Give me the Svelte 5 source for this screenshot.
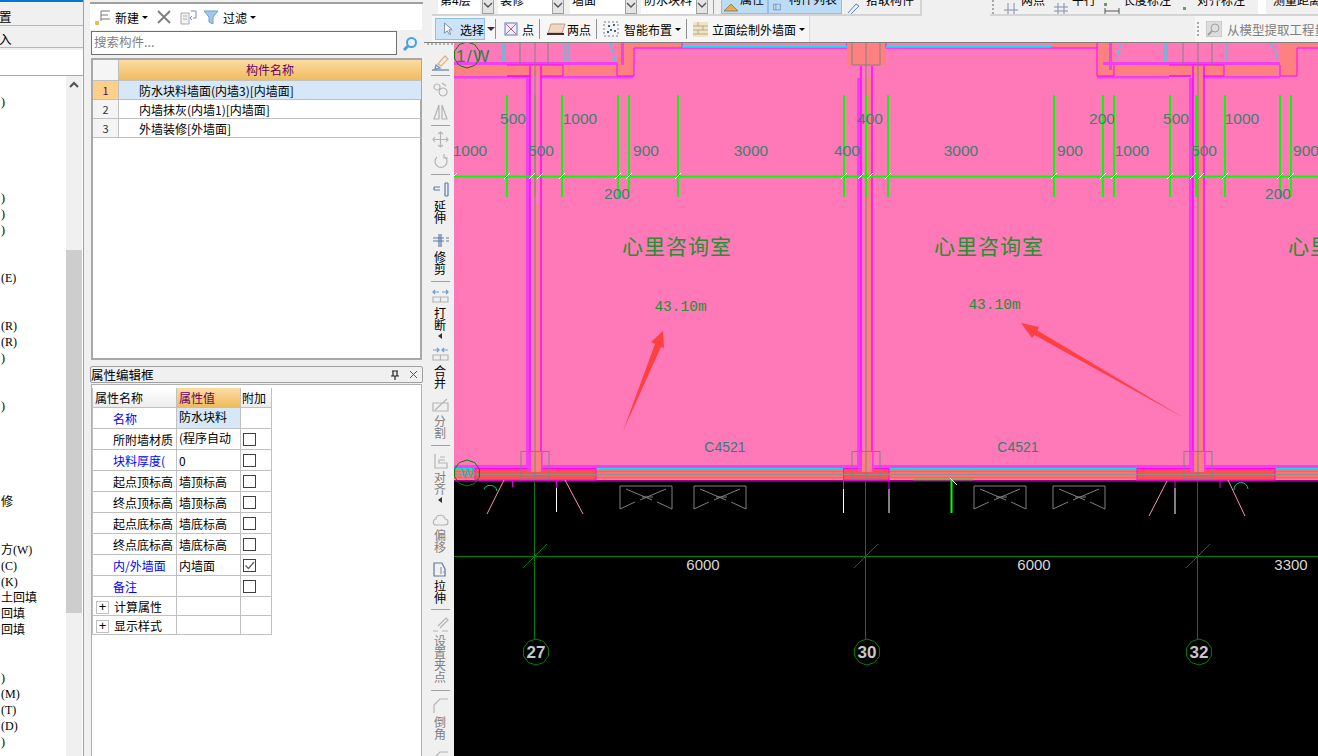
<script>
	const cjk = '"Noto Sans CJK SC", "Liberation Sans", sans-serif';

	// left tree list, one entry per 16px row
	const treeRows = ['', ')', '', '', '', '', '', ')', ')', ')', '', '', '(E)', '', '', '(R)', '(R)', ')', '', '', ')', '', '', '', '', '', '修', '', '', '方(W)', '(C)', '(K)', '土回填', '回填', '回填', '', '', ')', '(M)', '(T)', '(D)', ')'];

	const parts = ['防水块料墙面(内墙3)[内墙面]', '内墙抹灰(内墙1)[内墙面]', '外墙装修[外墙面]'];

	const props = [
		{ name: '名称', blue: true, value: '防水块料', top: true, sel: true },
		{ name: '所附墙材质', value: '(程序自动', top: true, box: 1 },
		{ name: '块料厚度(', blue: true, value: '0', box: 1 },
		{ name: '起点顶标高', value: '墙顶标高', box: 1 },
		{ name: '终点顶标高', value: '墙顶标高', box: 1 },
		{ name: '起点底标高', value: '墙底标高', box: 1 },
		{ name: '终点底标高', value: '墙底标高', box: 1 },
		{ name: '内/外墙面', blue: true, value: '内墙面', box: 2 },
		{ name: '备注', blue: true, value: '', box: 1 }
	];

	const B = '#5b7ba6', G = '#b4b4b4';
	const tools = [
		{ h: 25, pad: 5, icon: [['M7 11 L14 3 L17 6 L10 13 Z', '#e8b070'], ['M5 12 L9 15 L4 16 Z', '#7090c0'], ['M1 17 H18', B]] },
		{ sep: 1 },
		{ h: 22, pad: 2, icon: [['M6 4 a3 3 0 1 0 .1 0 M12 8 a4 4 0 1 0 .1 0 M11 3 L15 6', G]] },
		{ h: 23, pad: 2, icon: [['M8 3 L3 17 H8 Z M11 3 L16 17 H11 Z', G]] },
		{ sep: 1 },
		{ h: 22, pad: 2, icon: [['M9.5 2 V17 M2 9.5 H17 M7 4 L9.5 2 L12 4 M7 15 L9.5 17 L12 15 M4 7 L2 9.5 L4 12 M15 7 L17 9.5 L15 12', G]] },
		{ h: 22, pad: 2, icon: [['M14 5 A6 6 0 1 1 6 5 M13 2 V6 H17', G]] },
		{ sep: 1 },
		{ h: 51, text: '延伸', icon: [['M3 6 H9 M3 9 H9 M3 6 V9 M14 2 V15 M17 2 V15 M14 2 H17 M14 15 H17', B]] },
		{ h: 51, text: '修剪', icon: [['M2 6 H13 M2 9 H13 M8 2 V15 M10 2 V15 M15 6 H18 M15 9 H18', B]] },
		{ sep: 1 },
		{ h: 58, text: '打断', arrow: true, icon: [['M2 4 H8 M4 2 L2 4 L4 6 M17 4 H11 M15 2 L17 4 L15 6', '#6a9bd8'], ['M2 9 H17 V14 H2 Z M9.5 9 V14', G]] },
		{ h: 50, text: '合并', icon: [['M2 4 H8 M6 2 L8 4 L6 6 M17 4 H11 M13 2 L11 4 L13 6', '#6a9bd8'], ['M2 9 H17 V14 H2 Z M9.5 9 V14', G]] },
		{ h: 51, text: '分割', off: true, icon: [['M2 7 H17 V15 H2 Z M4 14 L16 3', G]] },
		{ sep: 1 },
		{ h: 58, text: '对齐', off: true, arrow: true, icon: [['M4 2 V16 H16 V11 H8 V8 H14 M9 5 H14', G]] },
		{ h: 51, text: '偏移', off: true, icon: [['M5 15 C1 15 2 9 5 9 C5 4 13 4 14 9 C18 9 18 15 14 15 Z', G]] },
		{ h: 50, text: '拉伸', icon: [['M3 2 H11 L14 8 V15 H3 Z', B], ['M10 6 V13 M15 11 H12', '#999']] },
		{ sep: 1 },
		{ h: 76, text: '设置夹点', off: true, icon: [['M7 10 L15 2 L17 4 L9 12 M2 15 H7 M11 15 H17', G]] },
		{ sep: 1 },
		{ h: 53, text: '倒角', off: true, icon: [['M3 16 V8 L9 2 H17', G]] },
		{ h: 20, icon: [['M3 18 V8 L9 2 H17', G]] }
	];

	// ---- drawing ----
	const grids = [535, 866, 1198];
	const limeX = [507, 562, 618, 629, 678, 844, 866, 888, 1054, 1103, 1114, 1170, 1196, 1225, 1280, 1291];
	const ticks = [454, 507, 532, 540, 562, 618, 629, 678, 844, 861, 870, 888, 1054, 1103, 1114, 1170, 1193, 1201, 1225, 1280, 1291];
	const dims = [
		['500', 513, 118], ['1000', 580, 118], ['1000', 470, 150], ['500', 541, 150], ['900', 646, 150],
		['3000', 751, 150], ['400', 847, 150], ['400', 870, 118], ['3000', 961, 150], ['900', 1070, 150],
		['1000', 1132, 150], ['200', 1102, 118], ['500', 1176, 118], ['1000', 1242, 118], ['500', 1204, 150],
		['900', 1306, 150], ['200', 617, 193], ['200', 1278, 193]
	];
	const windows = [620, 694, 974, 1053];
	const axes = [[535, '27'], [866, '30'], [1198, '32']];

	// "方(W)" -> the hanzi part and the narrow latin part
	function splitRow(row) {
		const m = row.match(/^([^()]*)(.*)$/);
		return [m[1], m[2]];
	}

	function ring(cx, cy, r) {
		let pts = [];
		for (let i = 0; i < 10; i++) {
			const a = (Math.PI * 2 * i) / 10 - Math.PI / 2;
			pts.push((cx + r * Math.cos(a)).toFixed(1) + ',' + (cy + r * Math.sin(a)).toFixed(1));
		}
		return pts.join(' ');
	}
</script>

{#snippet chevron()}
	<b class="drop"><svg width="10" height="10" viewBox="0 0 10 10"><path d="M1 1 L5 5 L9 1" fill="none" stroke="#555" stroke-width="1.4" /></svg></b>
{/snippet}

<div class="screen" style="--cjk: {cjk}">
	<div class="tree">
		<div class="strip"></div>
		<div class="tab">置</div>
		<div class="tab second">入</div>
		<div class="blank"></div>
		<div class="tree-body">
			<div class="tree-list">
				{#each treeRows as row}
					{@const [han, lat] = splitRow(row)}
					<div class="tree-row">{han}<span class="lat">{lat}</span></div>
				{/each}
			</div>
			<div class="scroll">
				<div class="scroll-up">
					<svg width="16" height="12" viewBox="0 0 16 12"><path d="M4 8 L8 4 L12 8" fill="none" stroke="#505050" stroke-width="2" /></svg>
				</div>
				<div class="scroll-thumb"></div>
			</div>
		</div>
	</div>

	<div class="middle">
		<div class="mid-top"></div>
		<div class="mid-tools">
			<svg width="18" height="18" viewBox="0 0 18 18">
				<path d="M1 15 H5 M3 13 V17" stroke="#e8c040" stroke-width="3" fill="none" />
				<path d="M7 3 H16 M7 7 H14 M7 11 H16 M7 3 V13" stroke="#777" fill="none" />
			</svg>
			<span class="tool-label">新建</span><i class="caret"></i>
			<svg class="gap-x" width="14" height="14" viewBox="0 0 14 14"><path d="M1 1 L13 13 M13 1 L1 13" stroke="#808080" stroke-width="2" /></svg>
			<svg class="gap-copy" width="17" height="16" viewBox="0 0 17 16">
				<path d="M1 4 H9 V15 H1 Z M3 7 H7 M3 10 H7" fill="#f4f4f4" stroke="#aaa" />
				<path d="M11 2 H16 V9 H13 M12 11 L10 9 L12 7" fill="none" stroke="#7090c8" />
			</svg>
			<svg class="gap-f" width="14" height="14" viewBox="0 0 14 14"><path d="M0 1 H14 L9 7 V14 L5 12 V7 Z" fill="#a0c8ea" stroke="#6c9ccc" /></svg>
			<span class="tool-label filter">过滤</span><i class="caret"></i>
		</div>
		<div class="search">
			<div class="search-box">搜索构件...</div>
			<div class="search-btn">
				<svg width="16" height="16" viewBox="0 0 16 16"><circle cx="9.5" cy="6.5" r="4.5" fill="#e8f4ff" stroke="#4d9de0" stroke-width="2" /><path d="M6 10 L2 14" stroke="#4d9de0" stroke-width="3" /></svg>
			</div>
		</div>
		<div class="list-panel">
			<div class="grid-head">
				<div class="corner"></div>
				<div class="head-gold">构件名称</div>
			</div>
			{#each parts as part, i}
				<div class="grid-row" class:picked={i === 0}>
					<div class="idx">{i + 1}</div>
					<div class="cell-name">{part}</div>
				</div>
			{/each}
		</div>
		<div class="prop-title">
			<span>属性编辑框</span>
			<svg width="10" height="10" viewBox="0 0 10 10"><path d="M2 1 H8 M3 1 V6 M7 1 V6 M1 6 H9 M5 6 V10" stroke="#222" fill="none" stroke-width="1.2" /></svg>
			<svg width="9" height="9" viewBox="0 0 9 9"><path d="M1 1 L8 8 M8 1 L1 8" stroke="#555" /></svg>
		</div>
		<div class="prop-panel">
			<div class="prop-grid">
				<div class="ph">属性名称</div>
				<div class="ph gold">属性值</div>
				<div class="ph last">附加</div>
				{#each props as p}
					<div class="pn" class:blue={p.blue}>{p.name}</div>
					<div class="pv" class:top={p.top} class:sel={p.sel}>{p.value}</div>
					<div class="pc">
						{#if p.box}
							<div class="check">
								{#if p.box === 2}
									<svg width="11" height="11" viewBox="0 0 11 11"><path d="M1.5 5.5 L4.5 8.5 L10 2" fill="none" stroke="#666" stroke-width="1.4" /></svg>
								{/if}
							</div>
						{/if}
					</div>
				{/each}
				{#each ['计算属性', '显示样式'] as g}
					<div class="pn group"><span class="plus">+</span>{g}</div>
					<div class="pv group"></div>
					<div class="pc group"></div>
				{/each}
			</div>
		</div>
	</div>

	<div class="work">
		<div class="bars">
			<div class="bar-one">
				<div class="seg seg-a">
					<div class="combo c1"><span>第4层</span></div>{@render chevron()}
					<div class="combo c2"><span>装修</span></div>{@render chevron()}
					<div class="combo c3"><span>墙面</span></div>{@render chevron()}
					<div class="combo c4"><span>防水块料</span></div>{@render chevron()}
					<i class="vsep"></i>
					<div class="on first">
						<svg width="16" height="12" viewBox="0 0 16 12"><path d="M1 10 L8 3 L15 10 Z" fill="#d8b060" stroke="#a08040" /></svg>
						<span>属性</span>
					</div>
					<div class="on">
						<svg width="14" height="12" viewBox="0 0 14 12"><path d="M1 1 H13 V11 H1 Z M5 1 V11" fill="none" stroke="#5070a0" /></svg>
						<span>构件列表</span>
					</div>
					<div class="plain">
						<svg width="14" height="12" viewBox="0 0 14 12"><path d="M2 11 L10 2 L13 4 L5 12" fill="none" stroke="#6080c0" /></svg>
						<span>拾取构件</span>
					</div>
				</div>
				<div class="seg seg-b">
					<i class="grip"></i>
					<svg class="m7" width="16" height="12" viewBox="0 0 16 12"><path d="M1 8 H15 M5 1 V12 M11 1 V12" stroke="#8090b0" fill="none" /></svg>
					<span class="m2">两点</span>
					<svg class="m8" width="16" height="12" viewBox="0 0 16 12"><path d="M1 5 H15 M1 9 H15 M5 1 V12 M11 1 V12" stroke="#8090b0" fill="none" /></svg>
					<span class="m3">平行</span>
					<svg class="m8" width="16" height="12" viewBox="0 0 16 12"><path d="M1 6 V12 M15 6 V12 M1 9 H15" stroke="#555" fill="none" /><rect x="0" y="1" width="3" height="3" fill="#60a060" /></svg>
					<span class="m3">长度标注</span>
					<svg class="m7" width="12" height="12" viewBox="0 0 12 12"><rect x="5" y="5" width="3" height="3" fill="#60a060" /></svg>
					<span class="m7">对齐标注</span>
					<i class="whitebox"></i>
					<span class="m7">测量距离</span>
				</div>
			</div>
			<div class="bar-two">
				<div class="seg2 seg-left">
					<div class="pick">
						<svg width="14" height="16" viewBox="0 0 14 16"><path d="M3 1 L3 13 L6 10 L9 15 L10 14 L8 9 L12 9 Z" fill="#fff" stroke="#7080a0" /></svg>
						<span>选择</span>
					</div>
					<i class="caret dark"></i>
					<i class="vsep tall lead"></i>
					<svg width="16" height="16" viewBox="0 0 16 16"><rect x="2" y="2" width="12" height="12" fill="#eef" stroke="#6878b8" /><path d="M3 3 L13 13 M13 3 L3 13" stroke="#c06080" /></svg>
					<span class="two-label m3">点</span>
					<i class="vsep tall"></i>
					<svg width="20" height="16" viewBox="0 0 20 16"><path d="M5 3 H19 L16 12 H2 Z" fill="#f5d5c0" stroke="#c0a090" /><path d="M1 13 H18" stroke="#333" stroke-width="2" /></svg>
					<span class="two-label m1">两点</span>
					<i class="vsep tall"></i>
					<svg width="16" height="16" viewBox="0 0 16 16"><rect x="1" y="1" width="14" height="14" fill="none" stroke="#808080" stroke-dasharray="2 2" /><path d="M5 5 h2 M10 4 h2 M7 9 h2 M11 10 h2 M4 11 h2" stroke="#4060a0" stroke-width="2" /></svg>
					<span class="two-label m5">智能布置</span><i class="caret"></i>
					<i class="vsep tall"></i>
					<svg width="15" height="15" viewBox="0 0 15 15"><rect width="15" height="15" fill="#efe4c4" /><path d="M0 4 H15 M0 8 H15 M0 12 H15 M5 0 V4 M10 4 V8 M5 8 V12" stroke="#b8a888" fill="none" /></svg>
					<span class="two-label m4">立面绘制外墙面</span><i class="caret"></i>
				</div>
				<div class="seg2 seg-right">
					<i class="grip"></i>
					<svg width="16" height="16" viewBox="0 0 16 16"><rect width="16" height="16" fill="#ddd" stroke="#bbb" /><circle cx="9" cy="7" r="4" fill="none" stroke="#a0a0a0" /><path d="M6 10 L2 14" stroke="#a0a0a0" stroke-width="2" /></svg>
					<span class="two-label off">从模型提取工程量</span>
				</div>
			</div>
		</div>
		<div class="stage">
			<div class="vtools">
				<div class="vgrip"></div>
				{#each tools as t}
					{#if t.sep}
						<div class="vline"></div>
					{:else}
						<div class="vtool" class:off={t.off} style="height: {t.h}px; padding-top: {t.pad ?? 4}px">
							<svg width="19" height="17" viewBox="0 0 19 17" overflow="visible">
								{#each t.icon as [d, c]}
									<path {d} stroke={c} fill="none" stroke-width="1.2" />
								{/each}
							</svg>
							{#if t.text}
								<div class="vtext">{t.text}</div>
							{/if}
							{#if t.arrow}
								<i class="small-arrow"></i>
							{/if}
						</div>
					{/if}
				{/each}
			</div>
			<svg class="cad" viewBox="454 43 864 713" width="864" height="713">
				<rect x="454" y="43" width="864" height="438" fill="#ff78b8" />
				<rect x="454" y="481" width="864" height="275" fill="#000" />

				<!-- upper wall, left bay -->
				<rect x="454" y="65" width="176" height="11" fill="#ff8080" />
				<rect x="454" y="62" width="175" height="3" fill="#f040f0" />
				<rect x="454" y="76" width="76" height="2.5" fill="#f040f0" />
				<rect x="541" y="76" width="92" height="2.5" fill="#f040f0" />
				<rect x="618" y="43" width="16" height="33" fill="#ff8080" />
				<rect x="624" y="43" width="58" height="5" fill="#ff8080" />
				<rect x="621" y="43" width="3" height="22" fill="#f040f0" />
				<path d="M507 65 H563 V76 H541 M530 76 H507 Z M617 65 V76 H634 V48 H682 V43 M682 48 H847 V43" fill="none" stroke="#ff00ff" stroke-width="1" />
				<rect x="682" y="46" width="165" height="1.6" fill="#00f0f0" />
				<rect x="847" y="43" width="39" height="22" fill="#ff8080" />

				<!-- upper wall, right bay -->
				<rect x="1097" y="43" width="17" height="33" fill="#ff8080" />
				<rect x="1051" y="43" width="46" height="5" fill="#ff8080" />
				<rect x="1103" y="62" width="187" height="3" fill="#f040f0" />
				<rect x="1108" y="65" width="170" height="11" fill="#ff8080" />
				<rect x="1280" y="43" width="17" height="33" fill="#ff8080" />
				<rect x="1297" y="43" width="21" height="5" fill="#ff8080" />
				<rect x="1097" y="76" width="72" height="2.5" fill="#f040f0" />
				<rect x="1204" y="76" width="76" height="2.5" fill="#f040f0" />
				<rect x="1109" y="43" width="3" height="27" fill="#f040f0" />
				<path d="M886 43 V48 H1097 V76 H1114 V65 M1097 43 V48 M1169 65 H1224 V76 H1203 M1191 76 H1169 Z M1280 65 V76 H1297 V48 H1318" fill="none" stroke="#ff00ff" />
				<rect x="886" y="46" width="165" height="1.6" fill="#00f0f0" />
				<path d="M503 43 V62 M505 43 V62 M565 43 V62 M568 43 V62 M1164 43 V62 M1167 43 V62 M1227 43 V62" stroke="#00e8f0" fill="none" />
				<path d="M610 43 Q614 52 615 62 M1122 43 Q1118 50 1117 62 M1270 43 Q1276 50 1278 62" stroke="#00e8f0" fill="none" />
				<path d="M520 43 V65 M548 43 V65 M1183 43 V65 M1212 43 V65" stroke="#808080" fill="none" />
				<path d="M852 43 V65 H880 V43" stroke="#808080" fill="none" />

				<!-- lower wall band -->
				<rect x="454" y="465" width="864" height="3" fill="#f040f0" />
				<rect x="454" y="468" width="864" height="12" fill="#ff7070" />
				<path d="M454 468.5 H1318 M454 479.5 H1318" stroke="#00e8f0" fill="none" />
				<path d="M454 471.5 H1318 M454 474.5 H1318 M454 477.5 H1318" stroke="#70a080" fill="none" />
				<rect x="454" y="480" width="864" height="1.6" fill="#a000a0" />
				<rect x="475" y="468.5" width="121" height="11.5" fill="#ff5050" stroke="#ff00ff" />
				<rect x="843.5" y="468.5" width="45.5" height="11.5" fill="#ff5050" stroke="#ff00ff" />
				<rect x="1137" y="468.5" width="138" height="11.5" fill="#ff5050" stroke="#ff00ff" />
				<path d="M454 474.5 H1318" stroke="#909090" fill="none" />

				<!-- columns -->
				{#each grids as x, i}
					<rect x={x - 9} y="78" width="4" height="388" fill="#f040f0" />
					<rect x={x} y={i === 0 ? 205 : 78} width="5" height={i === 0 ? 261 : 388} fill="#ff8080" />
					<path d="M{x - 5} 66 V466 M{x + 6} 66 V466" stroke="#ff00ff" stroke-width="1.4" fill="none" />
					<rect x={x - 8} y="452" width="16" height="20" fill="#f040f0" opacity="0.7" />
					<rect x={x - 4} y="452" width="10" height="20" fill="#ff8080" />
					<rect x={x - 14} y="451.5" width="28" height="27.5" fill="none" stroke="#808080" />
					<path d="M{x} 43 V480" stroke="#808080" fill="none" />
				{/each}

				<!-- dimension lines -->
				<path d="M454 176.5 H1318" stroke="#00ff00" stroke-width="2" />
				{#each limeX as x}
					<path d="M{x} 95 V197" stroke="#00ff00" stroke-width="2" />
				{/each}
				<path d="M535 95 V197" stroke="#70a030" stroke-width="1" />
				{#each ticks as x}
					<path d="M{x - 3} 179 L{x + 3} 173" stroke="#fff" stroke-width="1" />
				{/each}
				{#each dims as [txt, x, y]}
					<text class="dim" x={x} y={y + 6} text-anchor="middle">{txt}</text>
				{/each}

				<text class="room" x="677" y="254" text-anchor="middle">心里咨询室</text>
				<text class="room" x="989" y="254" text-anchor="middle">心里咨询室</text>
				<text class="room" x="1288" y="254">心里咨询室</text>
				<text class="elev" x="680.5" y="311" text-anchor="middle">43.10m</text>
				<text class="elev" x="994.5" y="309" text-anchor="middle">43.10m</text>
				<polygon points="623,431 655,344 651,342 663,331 664,348 661,347" fill="#ff4040" />
				<polygon points="1021,323 1039,327 1037.5,330.5 1184,418 1034.5,335 1032,338" fill="#ff4040" />
				<text class="door" x="725" y="452" text-anchor="middle">C4521</text>
				<text class="door" x="1018" y="452" text-anchor="middle">C4521</text>

				<!-- things outside the wall -->
				<path d="M504 480 L487 514 M565 480 L583 514 M1167 481 L1149 516 M1228 480 L1245 516" stroke="#ff90b0" fill="none" />
				<path d="M484 489 A7 7 0 0 1 497 491 M1234 490 A7 7 0 0 1 1248 489" stroke="#00d080" fill="none" />
				<path d="M512.5 481 V487 M556.5 481 V488 M843.5 481 V489 M889 481 V489 M1175 481 V488 M1220 481 V488" stroke="#e000e0" fill="none" />
				<path d="M556.5 488 V512 M843.5 489 V513 M889 489 V513 M1175 488 V514" stroke="#fff" fill="none" />
				<path d="M913 479.5 H973" stroke="#00ff00" stroke-width="1.6" />
				<path d="M951.5 480 V513" stroke="#00ff00" stroke-width="2" />
				<path d="M950 478 L957 485" stroke="#fff" />
				{#each windows as x}
					<path d="M{x + 15} 502 L{x} 509 V486 H{x + 52} V509 L{x + 37} 502 M{x + 6} 489 L{x + 32} 500 M{x + 46} 489 L{x + 20} 500 M{x + 22} 497 L{x + 33} 497" stroke="#808080" fill="none" />
				{/each}

				<!-- axes -->
				<path d="M454 556.5 H1318" stroke="#008000" />
				{#each axes as [x, label]}
					<path d="M{x - 0.5} 481 V640" stroke="#008000" />
					<path d="M{x - 12} 568 L{x + 12} 544" stroke="#008000" />
					<polygon points={ring(x + 1, 652, 13)} fill="none" stroke="#008000" />
					<text class="axis" x={x + 1} y="658" text-anchor="middle">{label}</text>
				{/each}
				<text class="span" x="703" y="570" text-anchor="middle">6000</text>
				<text class="span" x="1034" y="570" text-anchor="middle">6000</text>
				<text class="span" x="1291" y="570" text-anchor="middle">3300</text>

				<polygon points={ring(467, 55, 13)} fill="none" stroke="#008000" />
				<text class="mark" x="456" y="62">1/W</text>
				<polygon points={ring(467, 473, 13)} fill="none" stroke="#008000" />
				<text class="mark-w" x="467" y="478" text-anchor="middle">W</text>
			</svg>
		</div>
	</div>
</div>

<style>
	:global(body) {
		margin: 0;
		background: #f0f0f0;
	}
	.screen {
		display: flex;
		width: 1318px;
		height: 756px;
		overflow: hidden;
		background: #f0f0f0;
		font-family: var(--cjk);
		font-size: 12px;
		color: #000;
	}

	/* left tree */
	.tree {
		width: 84px;
		flex: none;
		display: flex;
		flex-direction: column;
		border-right: 1px solid #a0a0a0;
		box-sizing: border-box;
		margin-right: 6px;
	}
	.strip {
		height: 2px;
		background: #0078d7;
	}
	.tab {
		height: 21px;
		line-height: 23px;
		margin-top: 3px;
		background: #f0f0f0;
		border-bottom: 1px solid #b8b8b8;
		font-size: 12.5px;
		margin-left: -1px;
		box-sizing: border-box;
	}
	.tab.second {
		margin-top: 1px;
	}
	.blank {
		height: 25px;
		background: #fff;
		margin-top: 2px;
		border-bottom: 1px solid #a8a8a8;
	}
	.tree-body {
		flex: 1;
		display: flex;
		background: #fff;
		min-height: 0;
	}
	.tree-list {
		width: 66px;
		overflow: hidden;
		padding-top: 1px;
	}
	.tree-row {
		height: 16px;
		line-height: 16px;
		font-size: 12px;
		padding-left: 1px;
		white-space: nowrap;
	}
	.lat {
		font-family: "Liberation Serif", serif;
		font-size: 12px;
	}
	.scroll {
		width: 16px;
		background: #f0f0f0;
		display: flex;
		flex-direction: column;
	}
	.scroll-up {
		height: 17px;
		padding-top: 3px;
		margin-bottom: 154px;
	}
	.scroll-up svg {
		display: block;
	}
	.scroll-thumb {
		height: 363px;
		background: #cdcdcd;
	}

	/* middle */
	.middle {
		width: 334px;
		flex: none;
		display: flex;
		flex-direction: column;
	}
	.mid-top {
		height: 2px;
		border-bottom: 2px solid #a0a0a0;
		margin-right: 1px;
	}
	.mid-tools {
		height: 26px;
		display: flex;
		align-items: center;
		padding-left: 4px;
		background: #fff;
		margin-right: 2px;
	}
	.tool-label {
		margin-left: 3px;
		font-size: 12px;
	}
	.filter {
		margin-left: 5px;
	}
	.caret {
		display: inline-block;
		width: 0;
		height: 0;
		margin-left: 3px;
		border-left: 3px solid transparent;
		border-right: 3px solid transparent;
		border-top: 3px solid #000;
	}
	.caret.dark {
		margin-left: 2px;
		border-left-width: 4px;
		border-right-width: 4px;
		border-top-width: 4px;
		border-top-color: #333;
	}
	.gap-x {
		margin-left: 9px;
	}
	.gap-copy {
		margin-left: 9px;
	}
	.gap-f {
		margin-left: 7px;
	}
	.search {
		height: 26px;
		display: flex;
		padding: 1px 0 0 1px;
		box-sizing: border-box;
		margin-right: 1px;
	}
	.search-box {
		width: 306px;
		height: 24px;
		line-height: 20px;
		border: 1px solid #707070;
		background: #fff;
		color: #808080;
		padding-left: 2px;
		box-sizing: border-box;
		font-size: 12.5px;
	}
	.search-btn {
		flex: 1;
		display: flex;
		align-items: center;
		justify-content: center;
	}
	.list-panel {
		height: 302px;
		margin: 2px 2px 0 1px;
		border: 2px solid #a8a8a8;
		background: #fff;
		box-sizing: border-box;
	}
	.grid-head,
	.grid-row {
		display: flex;
		margin-right: -1px;
	}
	.grid-head {
		height: 21px;
		box-sizing: border-box;
		border-bottom: 1px solid #c0c0c0;
	}
	.corner {
		width: 25px;
		background: #f5f5f5;
		border-right: 1px solid #c0c0c0;
	}
	.head-gold {
		flex: 1;
		text-align: center;
		line-height: 20px;
		color: #660066;
		background: linear-gradient(#fbdca4, #f0bb5c);
	}
	.grid-row {
		height: 19px;
		box-sizing: border-box;
		border-bottom: 1px solid #c0c0c0;
	}
	.idx {
		width: 25px;
		text-align: center;
		line-height: 18px;
		font-size: 11px;
		background: #f4f4f4;
		border-right: 1px solid #c0c0c0;
		color: #333;
	}
	.cell-name {
		flex: 1;
		padding-left: 20px;
		line-height: 19px;
	}
	.picked .idx {
		background: #fdd08a;
		color: #660066;
	}
	.picked .cell-name {
		background: #d6e8f8;
	}
	.prop-title {
		height: 15px;
		margin: 6px 1px 0 0;
		border: 1px solid #a0a0a0;
		border-radius: 2px;
		display: flex;
		align-items: center;
		line-height: 14px;
		font-size: 12.5px;
		padding-right: 4px;
		gap: 9px;
	}
	.prop-title span {
		flex: 1;
	}
	.prop-panel {
		flex: 1;
		margin: 1px 2px 0 1px;
		background: #fff;
		border: 1px solid #b0b0b0;
		border-bottom: none;
		padding-top: 3px;
	}
	.prop-grid {
		display: grid;
		grid-template-columns: 84px 64px 31px;
		grid-template-rows: 20px repeat(9, 21px) 19px 19px;
		border-left: 1px solid #c0c0c0;
		width: 179px;
	}
	.ph,
	.pn,
	.pv,
	.pc {
		border-right: 1px solid #c0c0c0;
		border-bottom: 1px solid #c0c0c0;
		box-sizing: border-box;
		overflow: hidden;
		white-space: nowrap;
	}
	.ph {
		line-height: 19px;
		padding-left: 2px;
		background: linear-gradient(#fff, #ececec);
	}
	.ph.gold {
		color: #660066;
		background: linear-gradient(#fbdca4, #f0bb5c);
	}
	.ph.last {
		padding-left: 1px;
	}
	.pn {
		padding-left: 20px;
		line-height: 21px;
	}
	.pn.blue {
		color: #0000ff;
	}
	.pn.group {
		padding-left: 3px;
		padding-top: 2px;
		line-height: 18px;
		display: flex;
		align-items: center;
		gap: 5px;
	}
	.pv {
		padding-left: 2px;
		line-height: 21px;
	}
	.pv.top {
		line-height: 17px;
	}
	.pv.sel {
		background: #d6e8f8;
	}
	.pc {
		display: flex;
		align-items: center;
		padding-left: 2px;
	}
	.check {
		width: 13px;
		height: 13px;
		border: 1px solid #404040;
		box-sizing: border-box;
		display: flex;
		align-items: center;
		justify-content: center;
	}
	.plus {
		width: 11px;
		height: 11px;
		border: 1px solid #c0c0c0;
		line-height: 10px;
		text-align: center;
		font-size: 13px;
		font-family: "Liberation Sans", sans-serif;
		flex: none;
	}

	/* toolbars */
	.work {
		flex: 1;
		min-width: 0;
		display: flex;
		flex-direction: column;
	}
	.bars {
		height: 43px;
		flex: none;
		border-bottom: 1px solid #808080;
		box-sizing: border-box;
		overflow: hidden;
	}
	.bar-one {
		height: 16px;
		display: flex;
		justify-content: space-between;
		padding-left: 8px;
	}
	.seg {
		height: 16px;
		border-bottom: 2px solid #d4d4d4;
		box-sizing: border-box;
		display: flex;
		align-items: flex-end;
		overflow: hidden;
		white-space: nowrap;
		line-height: 14px;
	}
	.seg > * {
		flex: none;
	}
	.seg-a {
		width: 490px;
		border-right: 2px solid #d4d4d4;
	}
	.seg-b {
		width: 328px;
		padding-left: 2px;
	}
	.seg-b span,
	.combo span,
	.on span,
	.plain span {
		position: relative;
		top: -7px;
	}
	.m1 { margin-left: 1px; }
	.m2 { margin-left: 2px; }
	.m3 { margin-left: 3px; }
	.m4 { margin-left: 4px; }
	.m5 { margin-left: 5px; }
	.m7 { margin-left: 7px; }
	.m8 { margin-left: 8px; }
	.combo {
		height: 14px;
		background: #fff;
		padding-left: 2px;
		box-sizing: border-box;
		overflow: hidden;
	}
	.c1 { width: 42px; margin-left: 6px; }
	.c2 { width: 54px; margin-left: 4px; }
	.c3 { width: 55px; margin-left: 6px; }
	.c4 { width: 55px; margin-left: 4px; }
	.c4 span { margin-left: 1px; }
	.drop {
		width: 12px;
		height: 14px;
		border: 1px solid #a0a0a0;
		border-top: none;
		box-sizing: border-box;
		background: #e4e4e4;
		display: flex;
		justify-content: center;
		padding-top: 2px;
	}
	.c1 + .drop {
		margin-left: 2px;
	}
	.vsep {
		width: 1px;
		height: 14px;
		background: #a0a0a0;
		margin: 0 7px 0 5px;
	}
	.on,
	.plain {
		height: 14px;
		display: flex;
		align-items: flex-end;
		padding: 0 4px;
		box-sizing: border-box;
		overflow: hidden;
	}
	.on {
		width: 74px;
		background: #bcdcf6;
		border: 1px solid #90bfe8;
		border-top: none;
	}
	.on span {
		margin-left: 8px;
	}
	.on.first {
		width: 47px;
		padding: 0 1px;
	}
	.on.first span {
		margin-left: 1px;
	}
	.plain {
		margin-left: 4px;
		padding: 0;
	}
	.plain span {
		margin-left: 6px;
	}
	.grip {
		width: 2px;
		height: 14px;
		border-left: 2px dotted #a8a8a8;
		flex: none;
	}
	.whitebox {
		width: 8px;
		height: 14px;
		background: #fff;
		margin-left: 13px;
	}
	.bar-two {
		height: 26px;
		display: flex;
		justify-content: space-between;
		padding-left: 8px;
	}
	.seg2 {
		display: flex;
		align-items: center;
		white-space: nowrap;
		font-size: 12px;
	}
	.seg2 > * {
		flex: none;
	}
	.seg-left {
		width: 378px;
		background: #f6f6f6;
		box-sizing: border-box;
		border-right: 1px solid #dcdcdc;
		padding-left: 3px;
	}
	.seg-right {
		width: 123px;
		background: #f6f6f6;
		gap: 5px;
		overflow: hidden;
		padding-left: 2px;
		box-sizing: border-box;
	}
	.pick {
		width: 50px;
		height: 22px;
		display: flex;
		align-items: center;
		gap: 6px;
		background: #cde4f8;
		border: 1px solid #90bfe8;
		box-sizing: border-box;
		padding-left: 6px;
	}
	.two-label.off {
		color: #808080;
		font-size: 12.5px;
	}
	.vsep.tall {
		height: 20px;
		margin: 0 6px 0 5px;
		background: #909090;
	}
	.vsep.tall.lead {
		margin: 0 7px 0 0;
	}

	.stage {
		flex: 1;
		display: flex;
		min-height: 0;
	}
	.vtools {
		width: 30px;
		flex: none;
		display: flex;
		flex-direction: column;
		align-items: center;
		overflow: hidden;
		padding-left: 2px;
		box-sizing: border-box;
	}
	.vgrip {
		height: 5px;
		flex: none;
		width: 26px;
		border-top: 2px dotted #b0b0b0;
		box-sizing: border-box;
	}
	.vline {
		height: 1px;
		width: 19px;
		margin: 2px 0;
		background: #a0a0a0;
		flex: none;
	}
	.vtool {
		flex: none;
		display: flex;
		flex-direction: column;
		align-items: center;
		box-sizing: border-box;
		width: 100%;
		overflow: hidden;
	}
	.vtool svg {
		flex: none;
	}
	.vtext {
		width: 13px;
		font-size: 12px;
		line-height: 12px;
		margin-top: 2px;
		text-align: center;
		word-break: break-all;
	}
	.vtool.off .vtext {
		color: #808080;
	}
	.small-arrow {
		width: 0;
		height: 0;
		margin-top: 2px;
		border-top: 3px solid transparent;
		border-bottom: 3px solid transparent;
		border-right: 4px solid #333;
	}
	.cad {
		display: block;
		flex: none;
	}
	.dim {
		font-family: "Liberation Sans", sans-serif;
		font-size: 15.5px;
		fill: #408070;
	}
	.room {
		font-family: var(--cjk);
		font-size: 21px;
		fill: #259030;
		letter-spacing: 1px;
	}
	.elev {
		font-family: "Liberation Mono", monospace;
		font-size: 14.5px;
		fill: #259030;
	}
	.door {
		font-family: "Liberation Sans", sans-serif;
		font-size: 14px;
		fill: #308070;
	}
	.axis {
		font-family: "Liberation Sans", sans-serif;
		font-size: 17px;
		font-weight: bold;
		fill: #c8c8c8;
	}
	.span {
		font-family: "Liberation Sans", sans-serif;
		font-size: 15px;
		fill: #d8d8d8;
	}
	.mark {
		font-family: "Liberation Sans", sans-serif;
		font-size: 17px;
		letter-spacing: 1.5px;
		fill: #2f8050;
	}
	.mark-w {
		font-family: "Liberation Sans", sans-serif;
		font-size: 14px;
		fill: #30b8a8;
	}
</style>
